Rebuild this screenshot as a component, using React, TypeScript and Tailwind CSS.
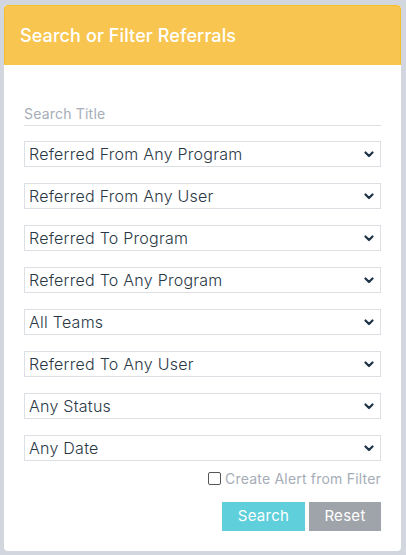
import React from "react";

const options = [
  "Referred From Any Program",
  "Referred From Any User",
  "Referred To Program",
  "Referred To Any Program",
  "All Teams",
  "Referred To Any User",
  "Any Status",
  "Any Date",
];

function Chevron() {
  return (
    <svg width="10" height="7" viewBox="0 0 10 7" className="shrink-0">
      <path d="M1.5 1.5 L5 5 L8.5 1.5" fill="none" stroke="#1f3347" strokeWidth="2.2" strokeLinecap="round" strokeLinejoin="round" />
    </svg>
  );
}

export default function App() {
  return (
    <div className="w-[406px] h-[555px] bg-[#d2d6de] pt-[5px] pl-[4px]" style={{ fontFamily: "Inter, 'Open Sans', sans-serif" }}>
      <div className="w-[397px] h-[546px] bg-white rounded-[4px] overflow-hidden flex flex-col">
        <div className="h-[60px] bg-[#f8c650] border-t border-l border-r border-[#f5bf2a] rounded-t-[4px] flex items-center pl-[15px]">
          <span className="text-white text-[18px] font-medium tracking-[0.1px]">Search or Filter Referrals</span>
        </div>
        <div className="px-[20px] flex flex-col">
          <div className="mt-[38px] h-[23px] border-b border-[#dcdfe3] text-[14px] text-[#a6adb8] tracking-[0.2px] flex items-start">Search Title</div>
          <div className="flex flex-col gap-[16px] mt-[15px]">
            {options.map((o) => (
              <div key={o} className="h-[26px] border border-[#dcdfe3] flex items-center justify-between pl-[4px] pr-[6px]">
                <span className="text-[16px] text-[#2a3846] font-[350] tracking-[0.25px]">{o}</span>
                <Chevron />
              </div>
            ))}
          </div>
          <div className="flex justify-end items-center mt-[7px] gap-[4px]">
            <span className="w-[13px] h-[13px] border border-[#555] rounded-[2px] bg-white" />
            <span className="text-[14px] text-[#a6adb8] tracking-[0.2px]">Create Alert from Filter</span>
          </div>
          <div className="flex justify-end mt-[13px] gap-[4px]">
            <button className="w-[83px] h-[29px] bg-[#5ecfdb] text-white text-[15px] tracking-[0.3px]">Search</button>
            <button className="w-[72px] h-[29px] bg-[#9fa4aa] text-white text-[15px] tracking-[0.3px]">Reset</button>
          </div>
        </div>
      </div>
    </div>
  );
}
